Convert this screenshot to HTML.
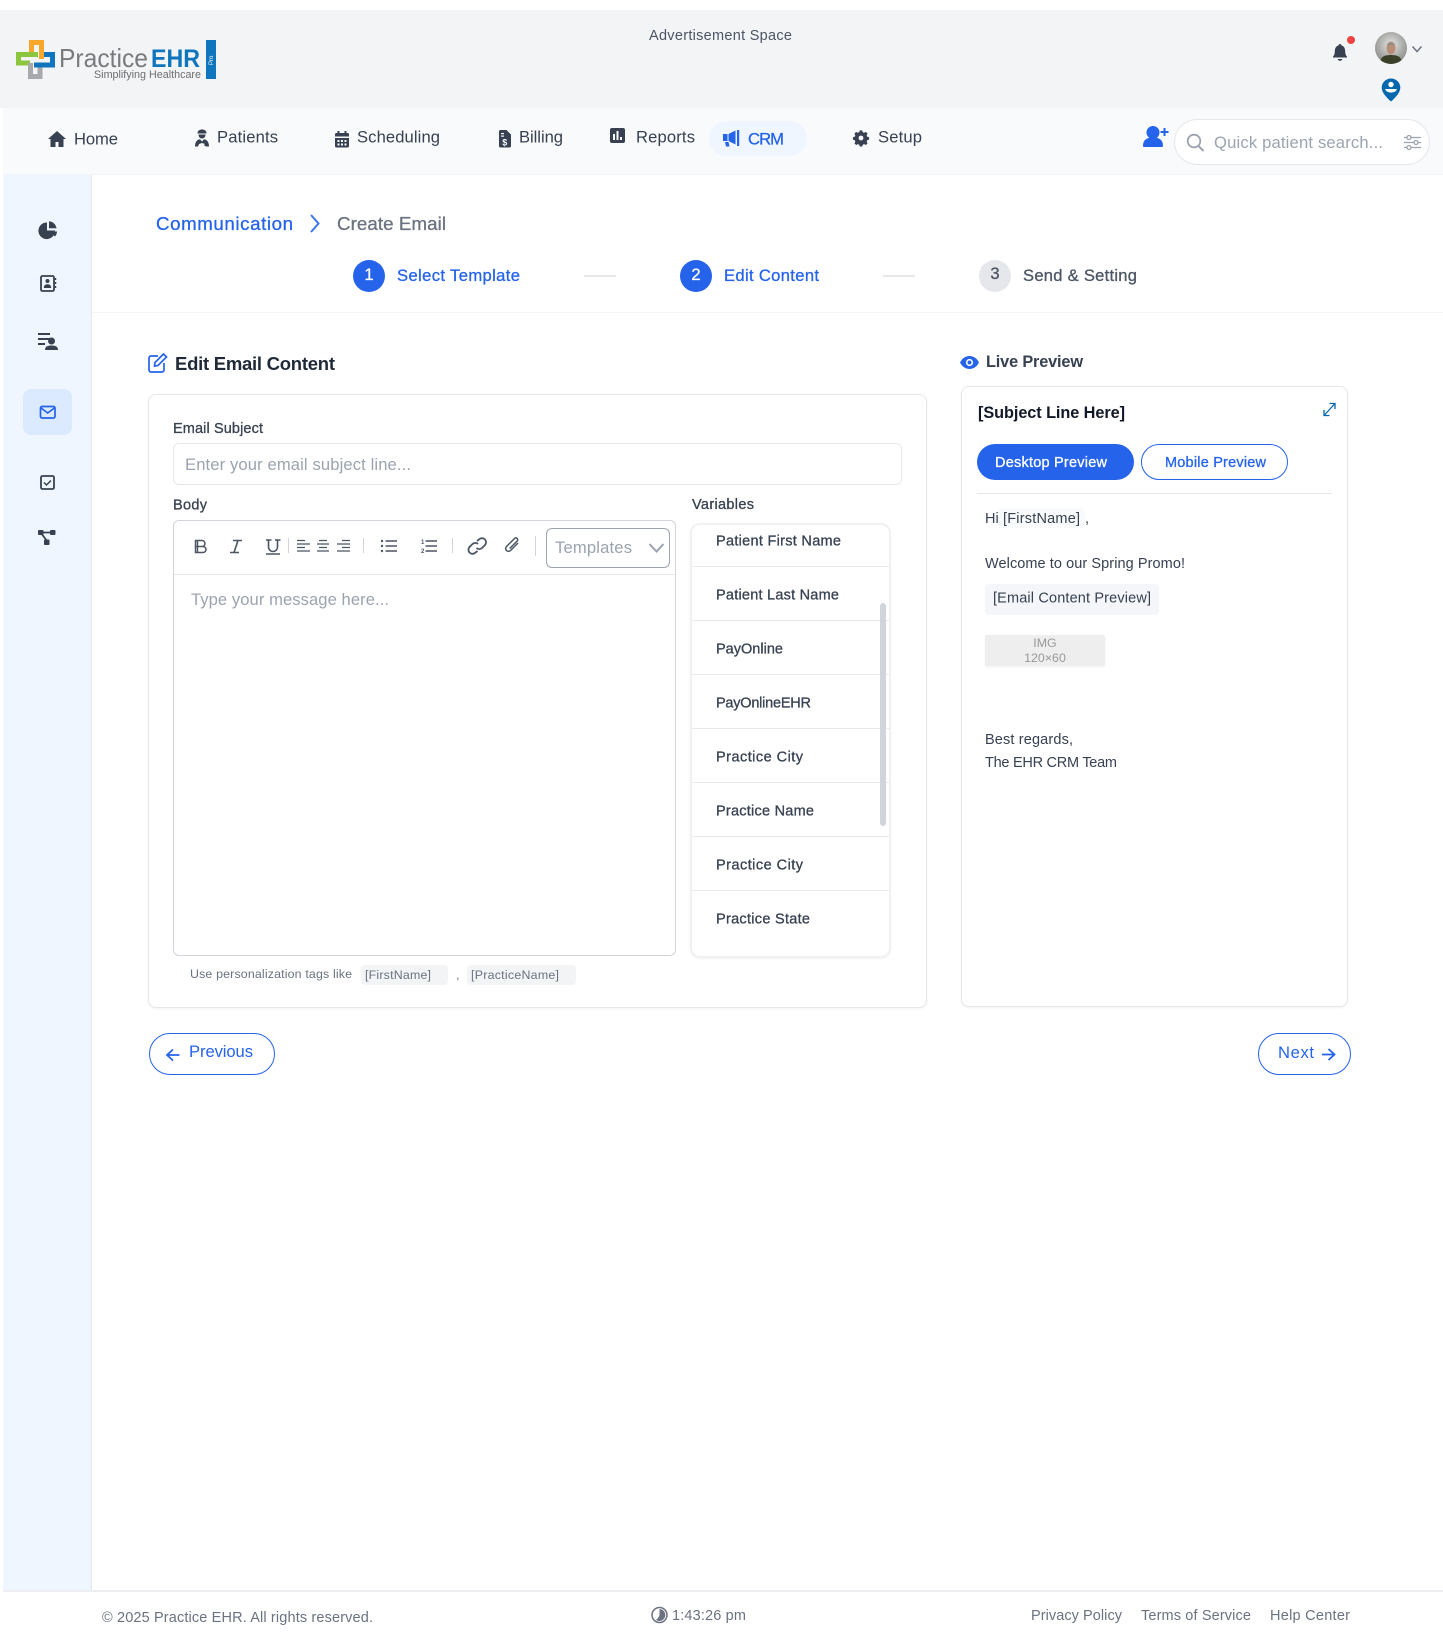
<!DOCTYPE html>
<html lang="en">
<head>
<meta charset="utf-8">
<title>Create Email - PracticeEHR</title>
<style>
html,body{margin:0;padding:0;background:#fff}
#p{position:relative;width:1443px;height:1643px;overflow:hidden;background:#fff;font-family:"Liberation Sans",sans-serif}
#p div{position:absolute;box-sizing:border-box}
svg{position:absolute;left:0;top:0}
text{font-family:"Liberation Sans",sans-serif}
.m{stroke-width:.3px;paint-order:stroke}
.g{fill:#374151}
.b{fill:#2563eb}
.h{fill:#9ca3af}
.s{fill:#6b7280}
</style>
</head>
<body>
<div id="p">
<div style="left:0;top:10px;width:1443px;height:98px;background:#f3f4f6"></div>
<div style="left:3px;top:108px;width:1440px;height:67px;background:#f9fafb;border-bottom:1px solid #f3f4f6"></div>
<div style="left:709px;top:121px;width:98px;height:35px;background:#eff6ff;border-radius:18px"></div>
<div style="left:1174px;top:119px;width:256px;height:46px;background:#fff;border:1px solid #e5e7eb;border-radius:23px"></div>
<div style="left:3px;top:175px;width:89px;height:1415px;background:#eff6ff;border-right:1px solid #e5e7eb"></div>
<div style="left:23px;top:389px;width:49px;height:46px;background:#dbeafe;border-radius:8px"></div>
<div style="left:92px;top:312px;width:1351px;height:1px;background:#f3f4f6"></div>
<div style="left:353px;top:260px;width:32px;height:32px;border-radius:50%;background:#2563eb"></div>
<div style="left:680px;top:260px;width:32px;height:32px;border-radius:50%;background:#2563eb"></div>
<div style="left:979px;top:260px;width:32px;height:32px;border-radius:50%;background:#e5e7eb"></div>
<div style="left:584px;top:275px;width:32px;height:2px;background:#e5e7eb"></div>
<div style="left:883px;top:275px;width:32px;height:2px;background:#e5e7eb"></div>

<div style="left:148px;top:394px;width:779px;height:614px;background:#fff;border:1px solid #e5e7eb;border-radius:8px;box-shadow:0 1px 2px rgba(0,0,0,.05)"></div>
<div style="left:173px;top:443px;width:729px;height:42px;background:#fff;border:1px solid #e5e7eb;border-radius:6px"></div>
<div style="left:173px;top:520px;width:503px;height:436px;background:#fff;border:1px solid #d1d5db;border-radius:6px"></div>
<div style="left:174px;top:574px;width:501px;height:1px;background:#e5e7eb"></div>
<div style="left:546px;top:528px;width:124px;height:40px;background:#fff;border:1px solid #9ca3af;border-radius:6px"></div>

<div style="left:690px;top:523px;width:201px;height:435px;background:#fff;border:2px solid #f0f1f3;border-radius:10px;box-shadow:0 1px 2px rgba(0,0,0,.05)"></div>
<div style="left:692px;top:566px;width:197px;height:1px;background:#e8eaed"></div>
<div style="left:692px;top:620px;width:197px;height:1px;background:#e8eaed"></div>
<div style="left:692px;top:674px;width:197px;height:1px;background:#e8eaed"></div>
<div style="left:692px;top:728px;width:197px;height:1px;background:#e8eaed"></div>
<div style="left:692px;top:782px;width:197px;height:1px;background:#e8eaed"></div>
<div style="left:692px;top:836px;width:197px;height:1px;background:#e8eaed"></div>
<div style="left:692px;top:890px;width:197px;height:1px;background:#e8eaed"></div>
<div style="left:880px;top:603px;width:6px;height:223px;background:#d1d5db;border-radius:3px"></div>

<div style="left:361px;top:965px;width:87px;height:20px;background:#f3f4f6;border-radius:4px"></div>
<div style="left:467px;top:965px;width:109px;height:20px;background:#f3f4f6;border-radius:4px"></div>
<div style="left:149px;top:1033px;width:126px;height:42px;border:1px solid #2563eb;border-radius:21px"></div>
<div style="left:1258px;top:1033px;width:93px;height:42px;border:1px solid #2563eb;border-radius:21px"></div>

<div style="left:961px;top:386px;width:387px;height:621px;background:#fff;border:1px solid #e5e7eb;border-radius:8px;box-shadow:0 1px 2px rgba(0,0,0,.05)"></div>
<div style="left:977px;top:444px;width:157px;height:36px;background:#2563eb;border-radius:18px"></div>
<div style="left:1141px;top:444px;width:147px;height:36px;border:1px solid #2563eb;border-radius:18px"></div>
<div style="left:977px;top:493px;width:355px;height:1px;background:#e5e7eb"></div>
<div style="left:998px;top:508px;width:87px;height:20px;background:#f9fafb;border-radius:4px"></div>
<div style="left:985px;top:584px;width:174px;height:31px;background:#f4f6fa;border-radius:4px"></div>
<div style="left:985px;top:635px;width:120px;height:31px;background:#eee;border-radius:2px;box-shadow:0 1px 2px rgba(0,0,0,.05)"></div>

<div style="left:3px;top:1590px;width:1440px;height:2px;background:#eceef1"></div>

<svg width="1443" height="1643" viewBox="0 0 1443 1643" xmlns="http://www.w3.org/2000/svg">
<!-- logo -->
<g fill="none" stroke-width="5">
<path d="M31.5 54V42.5H41.5V59" stroke="#f9a72b"/>
<path d="M38 54.5H18.5V63H30" stroke="#8cc63f"/>
<path d="M30.500 63V76.500H40V66" stroke="#a7a9ac"/>
<path d="M34 65H52.500V54.500H44" stroke="#0f75bc"/>
</g>
<text x="59" y="67" font-size="26" fill="#7a7b7e" textLength="89" lengthAdjust="spacingAndGlyphs">Practice</text>
<text x="151" y="67" font-size="25" font-weight="700" fill="#0f75bc" textLength="49" lengthAdjust="spacingAndGlyphs">EHR</text>
<text x="94" y="78" font-size="11" fill="#6d6e71" textLength="107" lengthAdjust="spacingAndGlyphs">Simplifying Healthcare</text>
<rect x="206" y="40" width="10" height="39" fill="#0f75bc"/>
<text transform="translate(213 65) rotate(-90)" font-size="6" fill="#fff">Pro</text>

<text x="649" y="40" font-size="14.5" fill="#4b5563" textLength="143">Advertisement Space</text>

<!-- bell -->
<path d="M1340 44c.9 0 1.400.6 1.400 1.400 2.800.8 3.800 3.300 3.800 6.100 0 2.800 1 4.200 1.800 5.100v.9h-14v-.9c.8-.9 1.800-2.300 1.800-5.100 0-2.800 1-5.300 3.800-6.100 0-.8.5-1.400 1.400-1.400zM1337.700 59h4.600c0 1.100-.9 1.800-2.300 1.800s-2.300-.7-2.300-1.800z" fill="#374151"/>
<circle cx="1351" cy="40" r="4" fill="#ef4444"/>
<!-- avatar -->
<defs>
<radialGradient id="av" cx="50%" cy="40%" r="60%"><stop offset="0" stop-color="#e5e5e3"/><stop offset="1" stop-color="#8b8d8b"/></radialGradient>
<clipPath id="avc"><circle cx="1391" cy="48" r="16"/></clipPath>
</defs>
<circle cx="1391" cy="48" r="16" fill="url(#av)"/>
<g clip-path="url(#avc)">
<path d="M1380 64c0-7 4-9 11-9s11 2 11 9z" fill="#3b4029"/>
<ellipse cx="1391" cy="48" rx="4.500" ry="6.500" fill="#b98e78"/>
<path d="M1387 45c0-3 8-3 8 0z" fill="#8f8f8a"/>
</g>
<path d="M1412.500 46.500l4.500 5 4.500-5" fill="none" stroke="#6b7280" stroke-width="1.500"/>
<!-- pin -->
<path d="M1391 78.500c-5 0-9.300 4-9.300 9.200 0 5 5.500 10.500 9.300 13.800 3.800-3.300 9.300-8.800 9.300-13.800 0-5.200-4.300-9.200-9.300-9.200z" fill="#0568ae"/>
<circle cx="1391" cy="84.500" r="2.700" fill="#fff"/>
<path d="M1385 89h12c-.8 2.300-3 3.500-6 3.500s-5.200-1.200-6-3.500z" fill="#fff"/>

<!-- nav -->
<path d="M57 131l-9 8h2.500v8h5v-5h3v5h5v-8H66z" fill="#374151"/>
<text x="74" y="144.500" font-size="16.600" class="g" textLength="44">Home</text>
<g fill="#374151"><path d="M197.500 133.500c0-2.700 2-4 4.500-4s4.500 1.300 4.500 4z"/><path d="M198.500 134.500h7c0 2.500-1.500 4-3.500 4s-3.500-1.500-3.500-4z"/><path d="M195 146.500c0-4.500 2-7 5-7.300l2 2.300 2-2.300c3 .3 5 2.800 5 7.300h-3l-1-2.500-3-1-3 1-1 2.500z"/><circle cx="205.500" cy="145" r="1.200"/></g>
<text x="217" y="142.500" font-size="16.600" class="g" textLength="61">Patients</text>
<path d="M335 134.500a1.500 1.500 0 0 1 1.500-1.500h1v-2h2v2h5v-2h2v2h1a1.500 1.500 0 0 1 1.500 1.500v2h-14zM335 138h14v8a1.500 1.500 0 0 1-1.500 1.500h-11A1.500 1.500 0 0 1 335 146z" fill="#374151"/>
<g fill="#f9fafb"><rect x="337.500" y="140" width="2" height="2"/><rect x="341" y="140" width="2" height="2"/><rect x="344.500" y="140" width="2" height="2"/><rect x="337.500" y="143.500" width="2" height="2"/><rect x="341" y="143.500" width="2" height="2"/><rect x="344.500" y="143.500" width="2" height="2"/></g>
<text x="357" y="142.500" font-size="16.600" class="g" textLength="83">Scheduling</text>
<path d="M499 131.500a1.500 1.500 0 0 1 1.500-1.500h6l4.500 4.500v11.500a1.500 1.500 0 0 1-1.500 1.500h-9a1.500 1.500 0 0 1-1.500-1.500z" fill="#374151"/>
<text x="502.300" y="145.500" font-size="9" font-weight="700" fill="#f9fafb">$</text>
<rect x="501" y="133" width="3" height="1.200" fill="#f9fafb"/><rect x="501" y="135.500" width="3" height="1.200" fill="#f9fafb"/>
<text x="519" y="142.500" font-size="16.600" class="g" textLength="44">Billing</text>
<rect x="610" y="128" width="15" height="15" rx="2" fill="#374151"/>
<g fill="#f9fafb"><rect x="613" y="134" width="2" height="6"/><rect x="616.500" y="131" width="2" height="9"/><rect x="620" y="137" width="2" height="3"/></g>
<text x="636" y="142.500" font-size="16.600" class="g" textLength="59">Reports</text>
<path d="M723 134h4.500v7H723zM728.500 134l7-3.500v14l-7-3.500zM737 130h2.200v16H737zM725 142h3.500l1 4.500h-3.500z" fill="#2563eb"/>
<text x="748" y="144.500" font-size="16.600" class="b m" stroke="#2563eb" textLength="36">CRM</text>
<path d="M860 130h3l.7 2.300 1.700.7 2.200-1.100 2.100 2.100-1.100 2.200.7 1.700 2.300.7v3l-2.300.7-.7 1.700 1.100 2.200-2.100 2.100-2.200-1.100-1.700.7-.7 2.300h-3l-.7-2.300-1.700-.7-2.200 1.100-2.100-2.100 1.100-2.200-.7-1.700-2.300-.7v-3l2.300-.7.700-1.700-1.100-2.200 2.100-2.100 2.200 1.100 1.700-.7z" fill="#374151" transform="translate(861 138) scale(.8) translate(-861.500 -139.500)"/>
<circle cx="861" cy="138" r="2.400" fill="#f9fafb"/>
<text x="878" y="142.500" font-size="16.600" class="g" textLength="44">Setup</text>
<circle cx="1153" cy="132.500" r="6.500" fill="#2563eb"/>
<path d="M1143 146c0-6 3.500-8.500 10-8.500s10 2.500 10 8.500c0 .500-.5 1-1 1h-18c-.5 0-1-.5-1-1z" fill="#2563eb"/>
<path d="M1164.500 128v8M1160.500 132h8" stroke="#2563eb" stroke-width="2" fill="none"/>
<circle cx="1194" cy="141" r="6.300" fill="none" stroke="#9ca3af" stroke-width="1.800"/>
<path d="M1198.500 146l5 5" stroke="#9ca3af" stroke-width="2"/>
<text x="1214" y="148" font-size="16.600" class="h" textLength="169">Quick patient search...</text>
<g fill="none" stroke="#9ca3af" stroke-width="1.300">
<path d="M1404 137.500h17M1404 142.500h17M1404 147.500h17"/>
<circle cx="1409" cy="137.500" r="2" fill="#fff"/><circle cx="1416" cy="142.500" r="2" fill="#fff"/><circle cx="1409" cy="147.500" r="2" fill="#fff"/>
</g>

<!-- sidebar -->
<path d="M47 222.500v8h8a8.300 8.300 0 1 1-8-8z" fill="#374151"/>
<path d="M49 221.300a8 8 0 0 1 7.500 7h-7.500z" fill="#374151"/>
<path d="M49.500 231.500h7.500a8 8 0 0 1-2 5z" fill="#374151"/>
<rect x="41" y="276" width="13" height="15" rx="1.500" fill="none" stroke="#374151" stroke-width="1.800"/>
<circle cx="47.500" cy="281" r="2" fill="#374151"/><path d="M43.800 288c0-2.600 1.500-3.700 3.700-3.700s3.700 1.100 3.700 3.700z" fill="#374151"/>
<path d="M55.500 278v2M55.500 282v2M55.500 286v2" stroke="#374151" stroke-width="1.500"/>
<g fill="#374151"><rect x="38" y="333" width="12" height="2"/><rect x="38" y="338" width="15" height="2"/><rect x="38" y="343" width="7" height="2"/><circle cx="51.500" cy="341" r="3.500"/><path d="M45 350c0-3.500 2.500-4.500 6.500-4.500s6.500 1 6.500 4.500z"/></g>
<rect x="40.500" y="406.500" width="14.500" height="11.500" rx="1.500" fill="none" stroke="#2563eb" stroke-width="1.700"/>
<path d="M41 408l6.700 5 6.700-5" fill="none" stroke="#2563eb" stroke-width="1.700"/>
<rect x="41" y="476" width="13" height="13" rx="1.500" fill="none" stroke="#374151" stroke-width="1.800"/>
<path d="M44 482.500l2.500 2.500 4.500-4.500" fill="none" stroke="#374151" stroke-width="1.500"/>
<g fill="#374151"><rect x="38" y="530" width="5.500" height="5" rx="1"/><rect x="50" y="530" width="5.500" height="5" rx="1"/><rect x="44" y="539.500" width="5.500" height="5.500" rx="1"/></g>
<path d="M41 532.500h12M41 533l6 8" stroke="#374151" stroke-width="1.800" fill="none"/>

<!-- breadcrumb -->
<text x="156" y="230" font-size="18.700" class="b m" stroke="#2563eb" textLength="137">Communication</text>
<path d="M311 215l7.500 8.500-7.500 8.500" fill="none" stroke="#3b76ee" stroke-width="2"/>
<text x="337" y="230" font-size="18.700" class="s m" stroke="#6b7280" textLength="109">Create Email</text>

<!-- stepper -->
<text x="369" y="280" font-size="16.600" text-anchor="middle" fill="#fff" class="m" stroke="#fff">1</text>
<text x="397" y="281" font-size="16.600" class="b m" stroke="#2563eb" textLength="123">Select Template</text>
<text x="696" y="280" font-size="16.600" text-anchor="middle" fill="#fff" class="m" stroke="#fff">2</text>
<text x="724" y="281" font-size="16.600" class="b m" stroke="#2563eb" textLength="95">Edit Content</text>
<text x="995" y="279" font-size="16.600" text-anchor="middle" fill="#4b5563" class="m" stroke="#4b5563">3</text>
<text x="1023" y="281" font-size="16.600" fill="#4b5563" class="m" stroke="#4b5563" textLength="114">Send &amp; Setting</text>

<!-- edit heading -->
<path d="M164 363v7a2 2 0 0 1-2 2h-11a2 2 0 0 1-2-2v-12a2 2 0 0 1 2-2h7" fill="none" stroke="#2563eb" stroke-width="1.700"/>
<path d="M155 362.500l8.500-8.500 3 3-8.500 8.500-3.500.6z" fill="none" stroke="#2563eb" stroke-width="1.700"/>
<text x="175" y="370" font-size="18.500" font-weight="700" fill="#1f2937" textLength="160">Edit Email Content</text>

<text x="173" y="433" font-size="14.500" class="g m" stroke="#374151" textLength="90">Email Subject</text>
<text x="185" y="470" font-size="16.600" class="h" textLength="226">Enter your email subject line...</text>
<text x="173" y="509.500" font-size="14.500" class="g m" stroke="#374151" textLength="34">Body</text>
<text x="692" y="509" font-size="14.500" class="g m" stroke="#374151" textLength="62">Variables</text>

<!-- toolbar -->
<g fill="none" stroke="#4b5563" stroke-width="1.500">
<path d="M195.500 540.500h6.500a3 3 0 0 1 0 6h-6.500zM195.500 546.500h7.500a3 3 0 0 1 0 6h-7.500zM197.500 540.500v12" stroke-width="1.500"/>
<path d="M233 540.500h9M230 552.500h9M238 540.500l-4 12" stroke-width="1.600"/>
<path d="M268.500 540v7a4.500 4.500 0 0 0 9 0v-7M266 540h5.500M275 540h5.500M266 554h14" stroke-width="1.600"/>
<path d="M297 540.500h8M297 544h13M297 547.500h8M297 551h13" stroke-width="1.200"/>
<path d="M319 540.500h8M317 544h12M319 547.500h8M317 551h12" stroke-width="1.200"/>
<path d="M342 540.500h8M337 544h13M342 547.500h8M337 551h13" stroke-width="1.200"/>
<path d="M385.500 541h11.500M385.500 546h11.500M385.500 551h11.500" stroke-width="1.500"/>
<path d="M425.500 541h11.500M425.500 546h11.500M425.500 551h11.500" stroke-width="1.500"/>
<path d="M477 541l2-1.500a4 4 0 0 1 6 5.500l-3 3a4 4 0 0 1-5.500 0M477.500 551l-2 1.500a4 4 0 0 1-6-5.500l3-3a4 4 0 0 1 5.500 0" stroke-width="1.800"/>
<path d="M518 543l-7.500 7.500a2.800 2.800 0 0 1-4-4l8-8a1.800 1.800 0 0 1 2.700 2.500l-7.500 7.500" stroke-width="1.500"/>
</g>
<g fill="#4b5563"><circle cx="382" cy="541" r="1.200"/><circle cx="382" cy="546" r="1.200"/><circle cx="382" cy="551" r="1.200"/></g>
<text x="421" y="544" font-size="6" font-weight="700" fill="#4b5563">1</text><text x="421" y="553" font-size="6" font-weight="700" fill="#4b5563">2</text>
<g stroke="#d1d5db" stroke-width="1"><path d="M288.500 538v15M363.500 538v15M452.500 538v15M535.500 536v20"/></g>
<text x="555" y="553" font-size="16.600" class="h" textLength="77">Templates</text>
<path d="M649.500 544l7 7.500 7-7.500" fill="none" stroke="#9ca3af" stroke-width="2"/>
<text x="191" y="605" font-size="16.600" class="h" textLength="198">Type your message here...</text>

<!-- variables -->
<g font-size="14.500" fill="#374151">
<text x="716" y="545.500" class="m" stroke="#374151" textLength="125">Patient First Name</text>
<text x="716" y="599.500" class="m" stroke="#374151" textLength="123">Patient Last Name</text>
<text x="716" y="653.500" class="m" stroke="#374151" textLength="67">PayOnline</text>
<text x="716" y="707.500" class="m" stroke="#374151" textLength="95">PayOnlineEHR</text>
<text x="716" y="761.500" class="m" stroke="#374151" textLength="87">Practice City</text>
<text x="716" y="815.500" class="m" stroke="#374151" textLength="98">Practice Name</text>
<text x="716" y="869.500" class="m" stroke="#374151" textLength="87">Practice City</text>
<text x="716" y="923.500" class="m" stroke="#374151" textLength="94">Practice State</text>
</g>

<!-- footnote -->
<text x="190" y="978" font-size="12.400" class="s" textLength="162">Use personalization tags like</text>
<text x="365" y="979" font-size="12.400" class="s" textLength="66">[FirstName]</text>
<text x="456" y="979" font-size="12.400" class="s">,</text>
<text x="471" y="979" font-size="12.400" class="s" textLength="88">[PracticeName]</text>

<!-- buttons -->
<path d="M179.500 1055h-12M173 1049.500l-6 5.500 6 5.500" fill="none" stroke="#2563eb" stroke-width="1.800"/>
<text x="189" y="1057" font-size="16.600" class="b" textLength="64">Previous</text>
<text x="1278" y="1058" font-size="16.600" class="b" textLength="36">Next</text>
<path d="M1322 1054.500h12M1328.500 1049l6 5.500-6 5.500" fill="none" stroke="#2563eb" stroke-width="1.800"/>

<!-- live preview -->
<path d="M960 362.500c2-4 5.500-6.500 9.500-6.500s7.500 2.500 9.500 6.500c-2 4-5.500 6.500-9.500 6.500s-7.500-2.500-9.500-6.500z" fill="#2563eb"/>
<circle cx="969.500" cy="362.500" r="3.600" fill="#fff"/><circle cx="969.500" cy="362.500" r="2" fill="#2563eb"/>
<text x="986" y="367" font-size="16.300" class="g" font-weight="700" textLength="97">Live Preview</text>
<text x="978" y="418" font-size="16.300" font-weight="700" fill="#111827" textLength="147">[Subject Line Here]</text>
<path d="M1324 410v5.500h5.500M1335 409v-5.500h-5.500M1324.500 415l10-11" fill="none" stroke="#0568ae" stroke-width="1.300"/>
<text x="995" y="467" font-size="14.500" fill="#fff" class="m" stroke="#fff" textLength="112">Desktop Preview</text>
<text x="1165" y="467" font-size="14.500" class="b m" stroke="#2563eb" textLength="101">Mobile Preview</text>
<text x="985" y="523" font-size="14.500" class="g">Hi</text>
<text x="1003" y="523" font-size="14.500" class="g" textLength="77">[FirstName]</text>
<text x="1085" y="523" font-size="14.500" class="g">,</text>
<text x="985" y="568" font-size="14.500" class="g" textLength="200">Welcome to our Spring Promo!</text>
<text x="993" y="602.500" font-size="14.500" class="g" textLength="158">[Email Content Preview]</text>
<text x="1045" y="647" font-size="12.400" fill="#999" text-anchor="middle">IMG</text>
<text x="1045" y="662" font-size="12.400" fill="#999" text-anchor="middle">120×60</text>
<text x="985" y="744" font-size="14.500" class="g" textLength="88">Best regards,</text>
<text x="985" y="767" font-size="14.500" class="g" textLength="132">The EHR CRM Team</text>

<!-- footer -->
<text x="102" y="1622" font-size="14.500" class="s" textLength="271">© 2025 Practice EHR. All rights reserved.</text>
<circle cx="659.500" cy="1615" r="7.500" fill="none" stroke="#6b7280" stroke-width="1.500"/>
<path d="M659.500 1609a6 6 0 1 1-3.500 11c2-1.500 3.500-3.500 3.500-6z" fill="#6b7280"/>
<text x="672" y="1620" font-size="14.500" class="s" textLength="74">1:43:26 pm</text>
<text x="1031" y="1620" font-size="14.500" class="s" textLength="91">Privacy Policy</text>
<text x="1141" y="1620" font-size="14.500" class="s" textLength="110">Terms of Service</text>
<text x="1270" y="1620" font-size="14.500" class="s" textLength="80">Help Center</text>
</svg>
</div>
</body>
</html>
